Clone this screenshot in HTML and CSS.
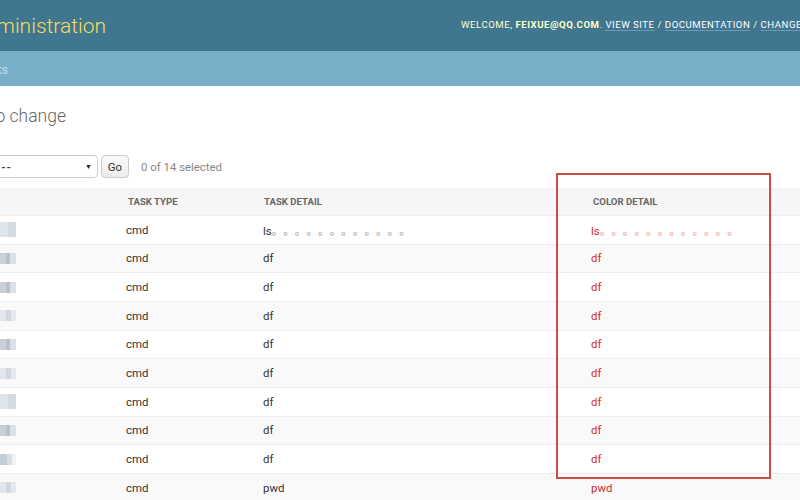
FILE: index.html
```html
<!DOCTYPE html>
<html>
<head>
<meta charset="utf-8">
<link rel="stylesheet" href="styles.css">
</head>
<body>
<div class="page">
  <header class="header">
    <div class="branding"><span class="brand-text">Django administration</span></div>
    <div class="user-tools">WELCOME, <strong>FEIXUE@QQ.COM</strong>. <a>VIEW SITE</a> / <a>DOCUMENTATION</a> / <a>CHANGE PASSWORD</a> / <a>LOG OUT</a></div>
  </header>
  <nav class="breadcrumbs"><div class="crumb-box"><span class="crumb-text">Home › Tasks</span></div></nav>
  <main class="content">
    <div class="title-box"><h1 class="title">Select task to change</h1></div>
    <div class="actions">
      <div class="select-wrap"><div class="select"><span class="select-box"><span class="select-text">---------</span></span><span class="arrow">▼</span></div></div>
      <div class="go">Go</div>
      <span class="counter">0 of 14 selected</span>
    </div>
    <div class="table">
      <div class="row head">
        <div class="c1"></div>
        <div class="c2 th">TASK TYPE</div>
        <div class="c3 th">TASK DETAIL</div>
        <div class="c4 th">COLOR DETAIL</div>
      </div>
      <div class="row"><div class="c1"><span class="blur b1"></span></div><div class="c2">cmd</div><div class="c3">ls<span class="dots">。。。。。。。。。。。。</span></div><div class="c4 red">ls<span class="dots">。。。。。。。。。。。。</span></div></div>
      <div class="row"><div class="c1"><span class="blur b2"></span></div><div class="c2">cmd</div><div class="c3">df</div><div class="c4 red">df</div></div>
      <div class="row"><div class="c1"><span class="blur b2"></span></div><div class="c2">cmd</div><div class="c3">df</div><div class="c4 red">df</div></div>
      <div class="row"><div class="c1"><span class="blur b3"></span></div><div class="c2">cmd</div><div class="c3">df</div><div class="c4 red">df</div></div>
      <div class="row"><div class="c1"><span class="blur b2"></span></div><div class="c2">cmd</div><div class="c3">df</div><div class="c4 red">df</div></div>
      <div class="row"><div class="c1"><span class="blur b3"></span></div><div class="c2">cmd</div><div class="c3">df</div><div class="c4 red">df</div></div>
      <div class="row"><div class="c1"><span class="blur b1"></span></div><div class="c2">cmd</div><div class="c3">df</div><div class="c4 red">df</div></div>
      <div class="row"><div class="c1"><span class="blur b2"></span></div><div class="c2">cmd</div><div class="c3">df</div><div class="c4 red">df</div></div>
      <div class="row"><div class="c1"><span class="blur b4"></span></div><div class="c2">cmd</div><div class="c3">df</div><div class="c4 red">df</div></div>
      <div class="row"><div class="c1"><span class="blur b3"></span></div><div class="c2">cmd</div><div class="c3">pwd</div><div class="c4 red">pwd</div></div>
    </div>
  </main>
  <div class="highlight"></div>
</div>
</body>
</html>
```

FILE: styles.css
```css
html, body {
  margin: 0;
  padding: 0;
}
body {
  width: 800px;
  height: 500px;
  overflow: hidden;
  background: #fff;
  font-family: Roboto, "Liberation Sans", "Noto Sans CJK SC", sans-serif;
  color: #333;
}
.page {
  position: relative;
  width: 800px;
  height: 500px;
  overflow: hidden;
}
.header {
  height: 51px;
  background: #417690;
  display: flex;
  align-items: center;
  white-space: nowrap;
}
.branding {
  width: 106px;
  flex-shrink: 0;
  display: flex;
  justify-content: flex-end;
}
.brand-text {
  font-size: 21px;
  font-weight: 300;
  color: #f5dd5d;
  white-space: nowrap;
  flex-shrink: 0;
}
.user-tools {
  margin-left: 355px;
  flex-shrink: 0;
  font-size: 9.6px;
  letter-spacing: 0.52px;
  color: #ffc;
  white-space: nowrap;
  margin-top: -2px;
}
.user-tools strong {
  font-weight: 700;
}
.user-tools a {
  color: #fff;
  border-bottom: 1px solid rgba(255,255,255,0.25);
}
.breadcrumbs {
  height: 35px;
  background: #79aec8;
  display: flex;
  align-items: center;
}
.crumb-box {
  width: 8px;
  display: flex;
  justify-content: flex-end;
  white-space: nowrap;
}
.crumb-text {
  flex-shrink: 0;
  font-size: 12px;
  color: #c4dce8;
  margin-top: 2px;
}
.content {
  padding-top: 19px;
}
.title-box {
  width: 66px;
  display: flex;
  justify-content: flex-end;
  white-space: nowrap;
}
.title {
  flex-shrink: 0;
  margin: 0;
  font-size: 17.5px;
  line-height: 22px;
  font-weight: 300;
  color: #666;
}
.actions {
  margin-top: 28px;
  height: 23px;
  display: flex;
  align-items: center;
}
.select-wrap {
  width: 98px;
  height: 23px;
  display: flex;
  justify-content: flex-end;
}
.select {
  flex-shrink: 0;
  width: 164px;
  height: 23px;
  box-sizing: border-box;
  border: 1px solid #ccc;
  border-radius: 4px;
  background: #fff;
  display: flex;
  align-items: center;
  justify-content: space-between;
  padding: 0 5px 0 0;
  font-size: 11.4px;
  color: #333;
  white-space: nowrap;
}
.select-box {
  width: 77px;
  flex-shrink: 0;
  display: flex;
  justify-content: flex-end;
}
.select-text {
  flex-shrink: 0;
  letter-spacing: 0.9px;
  font-weight: 700;
  color: #444;
}
.arrow {
  font-size: 7px;
  color: #222;
}
.go {
  margin-left: 3px;
  width: 28px;
  height: 23px;
  box-sizing: border-box;
  border: 1px solid #ccc;
  border-radius: 4px;
  background: linear-gradient(#fafafa, #ececec);
  display: flex;
  align-items: center;
  justify-content: center;
  font-size: 11.4px;
  color: #333;
}
.counter {
  margin-left: 12px;
  font-size: 11.4px;
  color: #888;
}
.table {
  margin-top: 10px;
}
.row {
  display: flex;
  height: 28.67px;
  box-sizing: border-box;
  border-bottom: 1px solid #eee;
  align-items: center;
  font-size: 11.4px;
  white-space: nowrap;
}
.row:nth-child(odd) {
  background: #f9f9f9;
}
.row.head {
  height: 28px;
  background: #f6f6f6;
  border-bottom: 1px solid #eee;
}
.th {
  font-size: 9.6px;
  font-weight: 700;
  color: #666;
}
.c1 {
  width: 126px;
  flex-shrink: 0;
  display: flex;
  align-items: center;
}
.c2 {
  width: 137px;
  flex-shrink: 0;
}
.c3 {
  width: 328px;
  flex-shrink: 0;
}
.c4 {
  flex: 1;
}
.head .c2 { padding-left: 2px; width: 135px; }
.head .c3 { padding-left: 1px; width: 327px; }
.head .c4 { padding-left: 2px; }
.dots {
  font-family: "Noto Sans CJK SC", sans-serif;
  font-size: 11.6px;
  text-spacing-trim: space-all;
  opacity: 0.55;
}
.red {
  color: #d42b2b;
}
.blur {
  display: block;
  width: 16px;
  height: 11px;
}
.b1 {
  height: 15px;
  background: linear-gradient(90deg, #dfe4e9 0 8px, #d3dae1 8px 16px);
}
.b2 {
  background: linear-gradient(90deg, #c9d0d7 0 6px, #b9c2cb 6px 10px, #dbe1e6 10px 16px);
}
.b3 {
  background: linear-gradient(90deg, #e2e6ea 0 6px, #d0d7de 6px 11px, #e6e9ec 11px 16px);
}
.b4 {
  background: linear-gradient(90deg, #c5cdd5 0 7px, #d9dfe5 7px 12px, #f0f2f4 12px 16px);
}
.highlight {
  position: absolute;
  left: 556px;
  top: 173px;
  width: 215px;
  height: 306px;
  box-sizing: border-box;
  border: 2px solid #d14a4a;
  pointer-events: none;
}
```
